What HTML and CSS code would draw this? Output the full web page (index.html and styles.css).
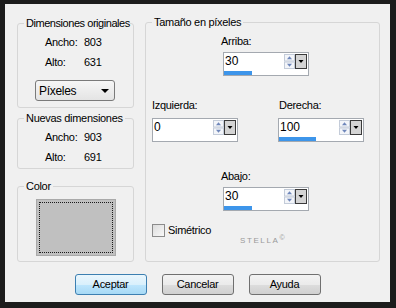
FILE: index.html
```html
<!DOCTYPE html>
<html>
<head>
<meta charset="utf-8">
<link rel="stylesheet" href="styles.css">
</head>
<body>
<div class="dialog">
  <div class="panels">
    <div class="left-col">
      <fieldset class="group g-orig">
        <legend>Dimensiones originales</legend>
        <div class="dims">
          <span>Ancho:</span><span>803</span>
          <span>Alto:</span><span>631</span>
        </div>
        <div class="select"><span>Píxeles</span><span class="caret"></span></div>
      </fieldset>
      <fieldset class="group g-new">
        <legend>Nuevas dimensiones</legend>
        <div class="dims">
          <span>Ancho:</span><span>903</span>
          <span>Alto:</span><span>691</span>
        </div>
      </fieldset>
      <fieldset class="group g-color">
        <legend>Color</legend>
        <div class="swatch"><div class="focus"></div></div>
      </fieldset>
    </div>
    <fieldset class="group g-size">
      <legend>Tamaño en píxeles</legend>
      <div class="field f-top">
        <div class="lbl">Arriba:</div>
        <div class="spin">
          <div class="spin-top">
            <span class="val">30</span>
            <svg class="arrows" width="11" height="15" viewBox="0 0 11 15"><rect x="0.5" y="0.5" width="10" height="6.5" fill="#f3f5f9" stroke="#c4ccd9"/><rect x="0.5" y="8" width="10" height="6.5" fill="#f3f5f9" stroke="#c4ccd9"/><path d="M3 5.2h5l-2.5-3z" fill="#6e86ba"/><path d="M3 9.8h5l-2.5 3z" fill="#6e86ba"/></svg>
            <svg class="drop" width="12" height="15" viewBox="0 0 12 15"><rect x="0.5" y="0.5" width="11" height="14" fill="#d4d4d4" stroke="#3a3a3a"/><path d="M3.5 6h5l-2.5 3z" fill="#000"/></svg>
          </div>
          <div class="bar" style="width:28px"></div>
        </div>
      </div>
      <div class="row-lr">
        <div class="field f-left">
          <div class="lbl">Izquierda:</div>
          <div class="spin">
            <div class="spin-top">
              <span class="val">0</span>
              <svg class="arrows" width="11" height="15" viewBox="0 0 11 15"><rect x="0.5" y="0.5" width="10" height="6.5" fill="#f3f5f9" stroke="#c4ccd9"/><rect x="0.5" y="8" width="10" height="6.5" fill="#f3f5f9" stroke="#c4ccd9"/><path d="M3 5.2h5l-2.5-3z" fill="#6e86ba"/><path d="M3 9.8h5l-2.5 3z" fill="#6e86ba"/></svg>
              <svg class="drop" width="12" height="15" viewBox="0 0 12 15"><rect x="0.5" y="0.5" width="11" height="14" fill="#d4d4d4" stroke="#3a3a3a"/><path d="M3.5 6h5l-2.5 3z" fill="#000"/></svg>
            </div>
            <div class="bar" style="width:0px"></div>
          </div>
        </div>
        <div class="field f-right">
          <div class="lbl">Derecha:</div>
          <div class="spin">
            <div class="spin-top">
              <span class="val">100</span>
              <svg class="arrows" width="11" height="15" viewBox="0 0 11 15"><rect x="0.5" y="0.5" width="10" height="6.5" fill="#f3f5f9" stroke="#c4ccd9"/><rect x="0.5" y="8" width="10" height="6.5" fill="#f3f5f9" stroke="#c4ccd9"/><path d="M3 5.2h5l-2.5-3z" fill="#6e86ba"/><path d="M3 9.8h5l-2.5 3z" fill="#6e86ba"/></svg>
              <svg class="drop" width="12" height="15" viewBox="0 0 12 15"><rect x="0.5" y="0.5" width="11" height="14" fill="#d4d4d4" stroke="#3a3a3a"/><path d="M3.5 6h5l-2.5 3z" fill="#000"/></svg>
            </div>
            <div class="bar" style="width:37px"></div>
          </div>
        </div>
      </div>
      <div class="field f-bottom">
        <div class="lbl">Abajo:</div>
        <div class="spin">
          <div class="spin-top">
            <span class="val">30</span>
            <svg class="arrows" width="11" height="15" viewBox="0 0 11 15"><rect x="0.5" y="0.5" width="10" height="6.5" fill="#f3f5f9" stroke="#c4ccd9"/><rect x="0.5" y="8" width="10" height="6.5" fill="#f3f5f9" stroke="#c4ccd9"/><path d="M3 5.2h5l-2.5-3z" fill="#6e86ba"/><path d="M3 9.8h5l-2.5 3z" fill="#6e86ba"/></svg>
            <svg class="drop" width="12" height="15" viewBox="0 0 12 15"><rect x="0.5" y="0.5" width="11" height="14" fill="#d4d4d4" stroke="#3a3a3a"/><path d="M3.5 6h5l-2.5 3z" fill="#000"/></svg>
          </div>
          <div class="bar" style="width:28px"></div>
        </div>
      </div>
      <div class="check"><span class="box"></span><span>Simétrico</span></div>
      <div class="logo">STELLA<span class="copy">©</span></div>
    </fieldset>
  </div>
  <div class="buttons">
    <div class="btn default">Aceptar</div>
    <div class="btn">Cancelar</div>
    <div class="btn">Ayuda</div>
  </div>
</div>
</body>
</html>
```

FILE: styles.css
```css
html, body {
  margin: 0;
  padding: 0;
}
body {
  width: 396px;
  height: 308px;
  overflow: hidden;
  background: #1c1c1c;
  font-family: "Liberation Sans", Arial, sans-serif;
  font-size: 11px;
  letter-spacing: -0.3px;
  color: #000;
}
.dialog {
  margin: 4px 0 0 5px;
  width: 385px;
  height: 298px;
  background: #f0f0f0;
  overflow: hidden;
}
.panels {
  display: flex;
  align-items: stretch;
  gap: 11px;
  margin: 12px 0 0 12px;
}
.left-col {
  display: flex;
  flex-direction: column;
  width: 117px;
  margin-top: 1px;
}
.group {
  margin: 0;
  padding: 0;
  min-width: 0;
  border: 1px solid #d6d6d6;
  border-radius: 3px;
  box-sizing: border-box;
}
.group legend {
  padding: 0 2px;
  margin-left: 6px;
  line-height: 12px;
  height: 12px;
  white-space: nowrap;
}
.g-orig legend {
  letter-spacing: -0.45px;
  padding-right: 0;
}
.g-orig {
  padding-bottom: 6px;
}
.g-new {
  margin-top: 4px;
  padding-bottom: 4px;
}
.g-color {
  margin-top: 11px;
  padding-bottom: 5px;
}
.dims {
  display: grid;
  grid-template-columns: 39px auto;
  row-gap: 7px;
  line-height: 13px;
  padding-left: 27px;
  margin-top: 7px;
}
.select {
  margin: 11px 0 0 17px;
  width: 80px;
  height: 21px;
  box-sizing: border-box;
  border: 1px solid #7a7a7a;
  border-radius: 3px;
  background: linear-gradient(#f6f6f6, #e4e4e4);
  display: flex;
  align-items: center;
  justify-content: space-between;
  padding: 0 5px 0 3px;
  font-size: 12px;
}
.caret {
  width: 0;
  height: 0;
  border-left: 4px solid transparent;
  border-right: 4px solid transparent;
  border-top: 4px solid #000;
}
.swatch {
  margin: 7px 0 0 18px;
  width: 80px;
  height: 57px;
  box-sizing: border-box;
  border: 1px solid #a9a9a9;
  background: #c0c0c0;
  padding: 2px;
}
.focus {
  height: 100%;
  box-sizing: border-box;
  border: 1px dotted #1a1a1a;
}
.g-size {
  width: 235px;
}
.lbl {
  line-height: 13px;
  height: 13px;
}
.f-top {
  margin: 7px 0 0 77px;
}
.f-top .lbl, .f-bottom .lbl {
  margin-left: -2px;
}
.f-top .spin, .f-bottom .spin {
  margin-top: 4px;
}
.row-lr {
  display: flex;
  margin-top: 23px;
}
.f-left {
  margin-left: 6px;
  width: 86px;
}
.f-right {
  margin-left: 40px;
}
.f-right .lbl {
  margin-left: 1px;
}
.row-lr .spin {
  margin-top: 6px;
}
.f-bottom {
  margin: 28px 0 0 77px;
}
.spin {
  width: 86px;
  height: 24px;
  box-sizing: border-box;
  border: 1px solid #a4a9b0;
  background: #fff;
  padding: 1px 1px 0 0;
}
.spin-top {
  display: flex;
  height: 15px;
}
.val {
  flex: 1;
  font-size: 12px;
  line-height: 15px;
  padding-left: 1px;
  letter-spacing: 0;
}
.arrows, .drop {
  display: block;
  flex: none;
}
.bar {
  margin-top: 2px;
  height: 4px;
  background: #3d95ea;
}
.check {
  display: flex;
  align-items: center;
  margin: 13px 0 0 6px;
  line-height: 13px;
  height: 13px;
}
.box {
  width: 13px;
  height: 13px;
  box-sizing: border-box;
  border: 1px solid #8b8b8b;
  background: linear-gradient(135deg, #dcdcdc, #f8f8f8);
  margin-right: 3px;
}
.logo {
  margin: -1px 0 0 94px;
  font-size: 8px;
  line-height: 9px;
  letter-spacing: 1.6px;
  color: #9a9a9a;
}
.copy {
  font-size: 7px;
  position: relative;
  top: -3px;
  letter-spacing: 0;
}
.buttons {
  display: flex;
  justify-content: center;
  gap: 15px;
  margin-top: 12px;
}
.btn {
  width: 72px;
  height: 21px;
  box-sizing: border-box;
  border: 1px solid #707070;
  border-radius: 3px;
  background: linear-gradient(#f3f3f3 0%, #ebebeb 50%, #dddddd 51%, #d0d0d0 100%);
  text-align: center;
  line-height: 19px;
  font-size: 11px;
}
.btn.default {
  border-color: #3c7fb1;
  background: linear-gradient(#eaf6fd 0%, #d9f0fc 50%, #bee6fd 51%, #a7d9f5 100%);
}
```
